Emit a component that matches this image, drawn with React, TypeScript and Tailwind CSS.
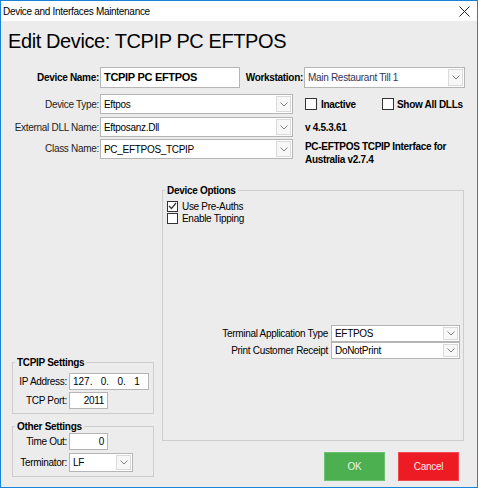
import React from 'react';

const Chevron = () => (
  <svg width="8" height="5" viewBox="0 0 8 5">
    <path d="M0.5 0.5 L4 4 L7.5 0.5" fill="none" stroke="#808080" strokeWidth="1" />
  </svg>
);

type SelectProps = { value: string; className?: string };

const Select: React.FC<SelectProps> = ({ value, className = '' }) => (
  <div className={`flex items-stretch bg-white border border-[#b5b5b5] ${className}`}>
    <div className="flex-1 flex items-center pl-[3px] overflow-hidden whitespace-nowrap">{value}</div>
    <div className="w-[15px] my-[1px] mr-[1px] border border-[#dadada] bg-[#f7f7f7] flex items-center justify-center">
      <Chevron />
    </div>
  </div>
);

const Check: React.FC<{ checked?: boolean; size?: string }> = ({ checked, size = 'w-[12px] h-[12px]' }) => (
  <span className={`${size} border border-[#333333] bg-white flex items-center justify-center shrink-0`}>
    {checked && (
      <svg width="9" height="8" viewBox="0 0 9 8">
        <path d="M1 4 L3.5 6.5 L8 1" fill="none" stroke="#333333" strokeWidth="1.2" />
      </svg>
    )}
  </span>
);

const TextBox: React.FC<{ value: string; className?: string }> = ({ value, className = '' }) => (
  <div className={`bg-white border border-[#b5b5b5] flex items-center px-[3px] whitespace-nowrap ${className}`}>{value}</div>
);

export default function App() {
  return (
    <div className="w-[478px] h-[488px] border border-[#1883d7] bg-[#ececec] flex flex-col font-['Liberation_Sans',Arial,sans-serif] tracking-[-0.3px] text-[10px] text-black">
      {/* Title bar */}
      <div className="h-[20px] bg-white flex items-center justify-between pl-[2px] pr-[7px] shrink-0">
        <span>Device and Interfaces Maintenance</span>
        <svg width="11" height="11" viewBox="0 0 11 11">
          <path d="M0.5 0.5 L10.5 10.5 M10.5 0.5 L0.5 10.5" stroke="#222222" strokeWidth="1" />
        </svg>
      </div>

      <div className="flex-1 flex flex-col px-[7px] pb-[6px]">
        <h1 className="mt-[6px] text-[20px] leading-[28px] tracking-[-0.4px]">Edit Device: TCPIP PC EFTPOS</h1>

        {/* Main fields */}
        <div className="mt-[12px] flex items-center h-[21px]">
          <span className="w-[91px] text-right font-bold">Device Name:</span>
          <TextBox value="TCPIP PC EFTPOS" className="ml-[1px] w-[140px] h-[21px] font-bold text-[11px]" />
          <span className="w-[63px] text-right font-bold">Workstation:</span>
          <Select value="Main Restaurant Till 1" className="ml-[1px] w-[161px] h-[21px] text-[#333355]" />
        </div>

        <div className="mt-[6px] flex items-center h-[20px]">
          <span className="w-[91px] text-right text-[#222222]">Device Type:</span>
          <Select value="Eftpos" className="ml-[1px] w-[193px] h-[20px]" />
          <div className="ml-[12px] w-[77px] flex items-center gap-[4px]">
            <Check />
            <span className="font-bold">Inactive</span>
          </div>
          <div className="flex items-center gap-[3px]">
            <Check />
            <span className="font-bold">Show All DLLs</span>
          </div>
        </div>

        <div className="mt-[3px] flex items-center h-[20px]">
          <span className="w-[91px] text-right text-[#222222]">External DLL Name:</span>
          <Select value="Eftposanz.Dll" className="ml-[1px] w-[193px] h-[20px]" />
          <span className="ml-[12px] font-bold">v 4.5.3.61</span>
        </div>

        <div className="mt-[2px] flex items-start h-[20px]">
          <span className="w-[91px] text-right text-[#222222] leading-[20px]">Class Name:</span>
          <Select value="PC_EFTPOS_TCPIP" className="ml-[1px] w-[193px] h-[20px]" />
          <span className="ml-[12px] mt-[1px] w-[165px] font-bold leading-[13px]">
            PC-EFTPOS TCPIP Interface for Australia v2.7.4
          </span>
        </div>

        {/* Lower area */}
        <div className="mt-[25px] flex-1 flex">
          <div className="ml-[4px] w-[142px] flex flex-col justify-end mb-[4px]">
            <fieldset className="border border-[#cdcdcd] pb-[4px]">
              <legend className="ml-[2px] px-[2px] font-bold leading-[13px]">TCPIP Settings</legend>
              <div className="mt-[4px] flex items-center">
                <span className="w-[54px] text-right">IP Address:</span>
                <div className="ml-[2px] w-[80px] h-[17px] bg-white border border-[#b5b5b5] flex items-center px-[3px] whitespace-pre tracking-[0px]">
                  127.   0.   0.   1
                </div>
              </div>
              <div className="mt-[2px] flex items-center">
                <span className="w-[54px] text-right">TCP Port:</span>
                <TextBox value="2011" className="ml-[2px] w-[39px] h-[17px] justify-end" />
              </div>
            </fieldset>
            <fieldset className="mt-[6px] border border-[#cdcdcd] pb-[4px]">
              <legend className="ml-[2px] px-[2px] font-bold leading-[13px]">Other Settings</legend>
              <div className="flex items-center">
                <span className="w-[54px] text-right">Time Out:</span>
                <TextBox value="0" className="ml-[2px] w-[39px] h-[17px] justify-end" />
              </div>
              <div className="mt-[3px] flex items-center">
                <span className="w-[54px] text-right">Terminator:</span>
                <Select value="LF" className="ml-[2px] w-[64px] h-[19px]" />
              </div>
            </fieldset>
          </div>

          <div className="ml-[8px] w-[302px] flex flex-col">
            <fieldset className="flex-1 border border-[#cdcdcd] flex flex-col pb-[81px]">
              <legend className="ml-[2px] px-[2px] font-bold leading-[13px]">Device Options</legend>
              <div className="mt-[3px] pl-[4px] flex items-center gap-[4px] h-[12px]">
                <Check checked size="w-[11px] h-[11px]" />
                <span>Use Pre-Auths</span>
              </div>
              <div className="mt-[0px] pl-[4px] flex items-center gap-[4px] h-[12px]">
                <Check size="w-[11px] h-[11px]" />
                <span>Enable Tipping</span>
              </div>
              <div className="flex-1" />
              <div className="flex items-center justify-end pr-[3px] h-[17px]">
                <span>Terminal Application Type</span>
                <Select value="EFTPOS" className="ml-[3px] w-[129px] h-[17px]" />
              </div>
              <div className="flex items-center justify-end pr-[3px] h-[17px]">
                <span>Print Customer Receipt</span>
                <Select value="DoNotPrint" className="ml-[3px] w-[129px] h-[17px]" />
              </div>
            </fieldset>
            <div className="mt-[11px] h-[29px] flex justify-end gap-[13px] pr-[5px]">
              <button className="w-[61px] h-[29px] bg-[#4caf50] text-[#e8f5e8] border border-[#6cc070]">OK</button>
              <button className="w-[61px] h-[29px] bg-[#ed1c24] text-[#fde8e8] border border-[#f04a50]">Cancel</button>
            </div>
          </div>
        </div>
      </div>
    </div>
  );
}
